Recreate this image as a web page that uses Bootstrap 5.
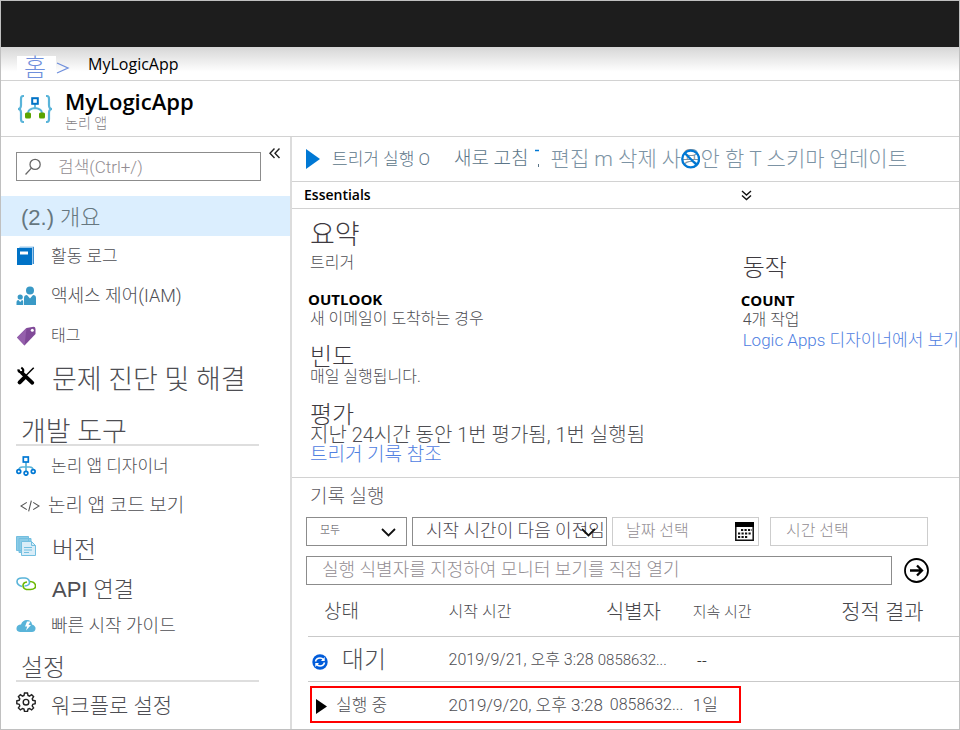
<!DOCTYPE html>
<html lang="ko">
<head>
<meta charset="utf-8">
<meta name="viewport" content="width=device-width, initial-scale=1">
<title>MyLogicApp</title>
<link href="https://cdn.jsdelivr.net/npm/bootstrap@5.3.0/dist/css/bootstrap.min.css" rel="stylesheet">
<style>
body{font-family:Roboto,"Noto Sans CJK KR",sans-serif;font-weight:300;color:#4e4e53;font-size:16px;line-height:20px;background:#fff}
.shell{min-height:100vh;border:1px solid #c0c0c0}
.latin{font-family:"Open Sans","Noto Sans",sans-serif;color:#000}
.arial{font-family:"Liberation Sans","Noto Sans CJK KR",sans-serif}
.fs11{font-size:11px}.fs14{font-size:14px}.fs15{font-size:15px}.fs16{font-size:16px}.fs17{font-size:17px}.fs18{font-size:18px}
.fs19{font-size:19px}.fs20{font-size:20px}.fs21{font-size:21px}.fs22{font-size:22px}.fs24{font-size:24px}.fs27{font-size:27px}
.line-b{border-bottom:1px solid #d2d2d2}
.topbar{height:46px;background:#1d1d1d}
.crumbs{height:34px;background:linear-gradient(#d6d6d6,#fff 75%);padding-left:16px}
.crumbs a{color:#6f8fdc;background:#fff;line-height:24px;padding:0 10px 0 7px}
.crumb-sep{width:24px}
.titlebar{height:56px;padding-left:16px}
.titlebar h1{line-height:24px}
.subtitle{color:#858185}
.side{flex:0 0 291px;border-right:2px solid #dcdcdc}
.search-row{padding:15px 9px 15px 15px}
.search-box{border:1px solid #8c8c8c;height:29px}
.search-box input{font-size:17px;font-weight:300;color:#888;border:0;outline:0;padding:0;background:transparent}
input::placeholder{color:#928d92!important;opacity:1}
.fold{height:2px;display:flex;align-items:center}
.side-item{height:40px;padding-left:15px;color:#4e4e53;text-decoration:none}
.side-item svg{flex:0 0 20px;margin-right:15px}
.side-item.current{background:#dbeefe;color:#66777f;padding-left:20px}
.side-title{margin:0 31px 0 15px;padding-left:5px;border-bottom:2px solid #dedede;font-weight:300;color:#4e4e53}
.side-title.dev{height:50px;padding-top:20px}
.side-title.cfg{height:36px;padding-top:8px}
.tools{height:45px;padding-left:14px}
.tools button{border:0;background:none;padding:0;white-space:nowrap;font-weight:300}
.tool-a{color:#5b7588;margin-right:24px}
.tool-a.again{margin-right:6px}
.tool-b{color:#7c93a4;font-size:21px}
.tip{margin-right:10px}
.over{position:absolute;left:0;top:0;width:100%;height:100%}
.ess-head{height:27px;padding-left:12px}
.pair{display:grid;grid-template-columns:2fr 1fr}
.ess-body{height:269px;padding-left:18px}
.ess-body h2,.ess-body p{margin:0;font-weight:300}
.ess-body a{color:#4f80e1;text-decoration:none;white-space:nowrap}
.ess-body h2{line-height:28px;color:#3e3a40}
.ess-body h2.tight{margin-top:18px;line-height:20px}
.ess-body h2.acts{margin-top:45px}
.ess-body .kind{font-weight:700;margin-left:-2px}
.hist{padding:9px 0 0 14px}
.hist h2{font-weight:300;line-height:20px;margin:0 0 10px 4px;color:#5d595f}
.fields{display:grid;grid-template-columns:101px 195px 147px 1fr;column-gap:5px;margin-right:31px}
.field{height:29px;border:1px solid #8c8c8c;position:relative}
.field.dim{border-color:#cdcdcd}
.field select,.field input{appearance:none;border:0;outline:0;background:transparent;width:100%;height:27px;font-weight:300;color:#4c4750;padding:0 0 2px 13px}
.field.wide input,.field.late input{padding-left:15px}
.fields .late{margin-left:6px}
.finder{margin:10px 30px 0 0}
.caret{position:absolute;right:10px;top:10px;pointer-events:none}
.runs{table-layout:fixed;width:100%;margin:0}
.runs th,.runs td{font-weight:300;white-space:nowrap;vertical-align:middle;padding:3px 0 0;border-bottom:1px solid #c9c9c9}
.runs thead tr{height:51px}.runs tbody tr{height:45px}
.runs th{color:#48484c}
.runs tbody tr:last-child td{border:0}
.runs-wrap{position:relative;margin-left:2px}
.mark-box{position:absolute;left:2px;bottom:3px;width:66.2%;height:37px;border:2px solid #f00;pointer-events:none}
</style>
<script src="https://cdn.jsdelivr.net/npm/bootstrap@5.3.0/dist/js/bootstrap.bundle.min.js"></script>
</head>
<body>
<div class="shell d-flex flex-column">
  <header>
    <div class="topbar"></div>
    <nav class="crumbs line-b d-flex align-items-center" aria-label="breadcrumb">
      <a href="#" class="fs24 text-decoration-none mt-2">홈</a>
      <svg class="crumb-sep mt-2" height="12" viewBox="0 0 24 12" fill="none" stroke="#6f8fdc" stroke-width="1.3"><path d="M1 1 12 6 1 11"/></svg>
      <span class="latin fs16 fw-normal ms-2">MyLogicApp</span>
    </nav>
    <div class="titlebar line-b d-flex align-items-center">
      <svg width="36" height="30" viewBox="0 0 36 30" fill="none"><path d="M7 2H6Q4 2 4 5V11Q4 15 1 15Q4 15 4 19V25Q4 28 6 28H7M29 2h1q2 0 2 3v6q0 4 3 4q-3 0-3 4v6q0 3-2 3h-1" stroke="#59b4d9" stroke-width="2.2"/><path d="M18 9v5M11 19q0-4 7-5q7 1 7 5" stroke="#59b4d9" stroke-width="1.8"/><rect x="15.200" y="4.200" width="5.600" height="5.600" stroke="#0072c6" stroke-width="2"/><rect x="8" y="18.500" width="6" height="6" rx="1.500" fill="#59a400"/><rect x="22" y="18.500" width="6" height="6" rx="1.500" fill="#59a400"/></svg>
      <div class="ms-2 ps-1 pt-1">
        <h1 class="latin fs22 fw-semibold m-0">MyLogicApp</h1>
        <div class="fs14 subtitle">논리 앱</div>
      </div>
    </div>
  </header>
  <div class="d-flex flex-grow-1">
    <aside class="side">
      <div class="search-row d-flex align-items-start">
        <label class="search-box d-flex align-items-center flex-grow-1 me-2">
          <svg class="ms-2 me-3" width="17" height="17" viewBox="0 0 16 16" fill="none" stroke="#666" stroke-width="1.2"><circle cx="9.500" cy="6" r="4.800"/><path d="M6 9.500 0.500 15.500"/></svg>
          <input class="w-75" type="text" aria-label="검색" placeholder="검색(Ctrl+/)">
        </label>
        <button class="fold btn p-0 border-0 lh-1" aria-label="접기"><svg width="12" height="11" viewBox="0 0 12 11" fill="none" stroke="#222" stroke-width="1.4"><path d="M5.500 .5 1 5.200 5.500 10M10.500.5 6 5.200 10.500 10"/></svg></button>
      </div>
      <nav>
        <a href="#" class="side-item current arial d-flex align-items-center fs22"><span class="pt-1">(2.) 개요</span></a>
        <a href="#" class="side-item d-flex align-items-center fs17"><svg width="20" height="20" viewBox="0 0 20 20"><path d="M4 .5h14v17l-2 1V3H2z" fill="#9cc9ec"/><path d="M17.500 1v17" stroke="#3c8ed0"/><path d="M1 2h15v17H1z" fill="#0072c6"/><path d="M4 5.500h8v3H4z" fill="#fff"/></svg>활동 로그</a>
        <a href="#" class="side-item d-flex align-items-center fs18"><svg width="20" height="20" viewBox="0 0 20 20" fill="#3999c6"><circle cx="14" cy="4.500" r="4"/><path d="M8 19V12q0-3 3-3l3 3.500L17 9q3 0 3 3v7z"/><circle cx="4.200" cy="11" r="2.600"/><path d="M.5 19v-3q0-2 2-2l1.700 2L6 14q1.200 0 1.200 1.500V19z"/></svg>액세스 제어(IAM)</a>
        <a href="#" class="side-item d-flex align-items-center fs16"><svg width="20" height="20" viewBox="0 0 20 20"><path d="M1 11.500 10.500 2 17.500 .8Q19.500.8 19.500 3v5L8.500 19.500z" fill="#804998"/><path d="M1 11.500 10.500 2l-2 17.500z" fill="#9560ac"/><circle cx="16.300" cy="4.300" r="1.500" fill="#fff"/></svg>태그</a>
        <a href="#" class="side-item d-flex align-items-center fs27"><svg class="me-3" width="22" height="22" viewBox="0 0 22 22" fill="none" stroke="#000"><path d="M6.500 7.500 18 18.500" stroke-width="4" stroke-linecap="round"/><path d="M2.500 3.800Q3 7.500 7 7.500Q9.500 4 5.800 1.800" stroke-width="2.500"/><path d="M19.500 2 11 10.500" stroke-width="1.600"/><path d="M9.500 12.500 4 18" stroke-width="4.500" stroke-linecap="round"/></svg><span class="pt-2">문제 진단 및 해결</span></a>
        <h2 class="side-title dev fs27">개발 도구</h2>
        <a href="#" class="side-item d-flex align-items-center fs17"><svg width="20" height="20" viewBox="0 0 20 20" fill="none" stroke="#0078d4" stroke-width="1.700"><path d="M10 6v9M3 14q0-3 3.500-3h7q3.500 0 3.500 3" stroke="#59b4d9"/><rect x="7.300" y="1" width="5" height="5" fill="#fff"/><circle cx="2.800" cy="15.500" r="1.900" fill="#fff"/><circle cx="10" cy="17.300" r="1.900" fill="#fff"/><circle cx="17.200" cy="15.500" r="1.900" fill="#fff"/></svg>논리 앱 디자이너</a>
        <a href="#" class="side-item d-flex align-items-center fs19"><svg class="ms-1 me-2" width="22" height="14" viewBox="0 0 22 14" fill="none" stroke="#555" stroke-width="1.200"><path d="M7.500 3 1 7l6.500 4M14.500 3 21 7l-6.500 4M12.500 1 9.500 13"/></svg>논리 앱 코드 보기</a>
        <a href="#" class="side-item d-flex align-items-center fs24"><svg class="me-3" width="20" height="20" viewBox="0 0 20 20" fill="#d9edf8" stroke="#73bfe0"><path d="M.5.5h12v14H.5zM3 2.500h12v14H3z" fill="#8ccbe6"/><path d="M5.500 5.500h10l4 4v10h-14z"/><path d="M15.500 5.500v4h4M8 11.500h8M8 14h8M8 16.500h5" fill="none"/></svg><span class="pt-2">버전</span></a>
        <a href="#" class="side-item arial d-flex align-items-center fs22"><svg class="me-3" width="20" height="20" viewBox="0 0 20 20" fill="none" stroke-width="1.600"><path d="M6 10.500q-5-1.500-5-5t5-3.500h3q4 .5 4.500 4t-5 4" stroke="#59b4d9"/><path d="M14 5.500q5 .5 5.500 4t-5 4h-4q-3.500-1-3.500-4T11 6" stroke="#6bb700"/></svg><span class="pt-2">API 연결</span></a>
        <a href="#" class="side-item d-flex align-items-center fs18"><svg width="20" height="20" viewBox="0 0 20 20"><path d="M4 16Q0 15.500.5 12T5 8.500Q6.500 4 11 4q4.500 0 5 4.500Q20 10 19.500 13T16 16z" fill="#59b4d9"/><path d="M11 5.500h3.500L12.500 9h2.500l-5 5.500 1.200-4H9z" fill="#fff"/></svg>빠른 시작 가이드</a>
        <h2 class="side-title cfg fs24">설정</h2>
        <a href="#" class="side-item d-flex align-items-center fs21"><svg width="20" height="20" viewBox="0 0 20 20" fill="none" stroke="#222" stroke-width="1.400"><path d="M8.500 1h3l.5 2.500 1.500.6 2.100-1.400 2 2-1.400 2.100.6 1.500 2.400.5v3l-2.400.5-.6 1.500 1.400 2.100-2 2-2.100-1.400-1.500.6-.5 2.400h-3L8 17.100l-1.500-.6-2.100 1.400-2-2 1.400-2.100-.6-1.500L.8 11.800v-3l2.400-.5.6-1.500-1.400-2.100 2-2 2.100 1.400L8 3.500z"/><circle cx="10" cy="10.200" r="2.800"/></svg><span class="pt-2">워크플로 설정</span></a>
      </nav>
    </aside>
    <main class="flex-grow-1" style="min-width:0">
      <div class="tools line-b d-flex align-items-center">
        <button class="tool-a fs17 d-flex align-items-center"><svg class="me-2" width="18" height="20" viewBox="0 0 18 20"><path d="M0 0 14 10 0 20z" fill="#0078d4"/></svg>트리거 실행 O</button>
        <button class="tool-a again fs19">새로 고침</button>
        <svg class="tip" width="6" height="20" viewBox="0 0 6 20"><path d="M0 1.500h4" stroke="#0078d4" stroke-width="1.500"/><path d="M3.500 15v3" stroke="#5b7588"/></svg>
        <button class="tool-b">편집 m 삭제 사<span class="position-relative">용<svg class="over" viewBox="0 0 20 20" preserveAspectRatio="xMidYMid meet" fill="none" stroke="#0078d4" stroke-width="2.400"><circle cx="10" cy="10" r="8.700"/><path d="M4 4 16 16"/></svg></span>안 함 T 스키마 업데이트</button>
      </div>
      <div class="ess-head pair line-b align-items-center">
        <span class="latin fs14 fw-semibold">Essentials</span>
        <button class="btn p-0 border-0 lh-1 text-start" aria-label="펼치기"><svg width="11" height="11" viewBox="0 0 11 11" fill="none" stroke="#111" stroke-width="1.400"><path d="M1 1l4.500 4L10 1M1 5.500l4.500 4L10 5.500"/></svg></button>
      </div>
      <section class="ess-body pair line-b">
        <div>
          <h2 class="fs27 pt-2 mt-1">요약</h2>
          <p class="fs16 mt-1">트리거</p>
          <p class="latin kind fs15 mt-3">OUTLOOK</p>
          <p class="fs16">새 이메일이 도착하는 경우</p>
          <h2 class="fs24 tight">빈도</h2>
          <p class="fs16">매일 실행됩니다.</p>
          <h2 class="fs24 tight">평가</h2>
          <p class="fs20">지난 24시간 동안 1번 평가됨, 1번 실행됨</p>
          <p class="fs19"><a href="#">트리거 기록 참조</a></p>
        </div>
        <div>
          <h2 class="fs24 acts">동작</h2>
          <p class="latin kind fs15 mt-2">COUNT</p>
          <p class="fs16">4개 작업</p>
          <p class="fs17"><a href="#">Logic Apps 디자이너에서 보기</a></p>
        </div>
      </section>
      <section class="hist">
        <h2 class="fs19">기록 실행</h2>
        <div class="fields">
          <div class="field"><select class="fs11" aria-label="상태"><option>모두</option></select><svg class="caret" width="15" height="9" viewBox="0 0 15 9" fill="none" stroke="#111" stroke-width="1.800"><path d="M1 1l6.500 6.500L14 1"/></svg></div>
          <div class="field"><select class="fs18" aria-label="시작 시간"><option>시작 시간이 다음 이전임</option></select><svg class="caret" width="15" height="9" viewBox="0 0 15 9" fill="none" stroke="#111" stroke-width="1.800"><path d="M1 1l6.500 6.500L14 1"/></svg></div>
          <div class="field dim"><input class="fs16" type="text" placeholder="날짜 선택" aria-label="날짜"><svg class="position-absolute end-0 me-1 mt-1 top-0" width="19" height="19" viewBox="0 0 19 19"><path d="M.8.800h17.400v17.400H.8z" fill="#fff" stroke="#111" stroke-width="1.500"/><path d="M0 0h19v5H0z"/><path d="M6 8h11M3 11.500h14M3 15h10" stroke="#111" stroke-width="2.200" stroke-dasharray="2.200 1.300"/></svg></div>
          <div class="field dim late"><input class="fs16" type="text" placeholder="시간 선택" aria-label="시간"></div>
        </div>
        <div class="finder d-flex align-items-center">
          <div class="field wide flex-grow-1"><input class="fs18" type="text" placeholder="실행 식별자를 지정하여 모니터 보기를 직접 열기" aria-label="실행 식별자"></div>
          <button class="btn p-0 border-0 lh-1 ms-2" aria-label="열기"><svg class="ms-1" width="25" height="25" viewBox="0 0 25 25" fill="none" stroke="#000"><circle cx="12.500" cy="12.500" r="11.500" stroke-width="1.800"/><path d="M6 12.500h12M13 7.500l5 5-5 5" stroke-width="2.300"/></svg></button>
        </div>
        <div class="runs-wrap">
          <table class="runs">
            <colgroup><col style="width:21.6%"><col style="width:22.300%"><col style="width:15.200%"><col style="width:22.800%"><col></colgroup>
            <thead><tr>
              <th class="fs19"><span class="ms-3">상태</span></th><th class="fs16">시작 시간</th><th class="fs20"><span class="ms-2 ps-1">식별자</span></th><th class="fs15">지속 시간</th><th class="fs21">정적 결과</th>
            </tr></thead>
            <tbody>
              <tr>
                <td class="fs24"><svg class="ms-1 me-2" width="16" height="16" viewBox="0 0 16 16"><circle cx="8" cy="8" r="7.700" fill="#015cda"/><path d="M3.500 7.500q.8-3.500 4.500-3.500 2.200 0 3.500 1.800M12.500 8.500q-.8 3.500-4.500 3.500-2.200 0-3.500-1.800" fill="none" stroke="#fff" stroke-width="1.600"/><path d="M12.700 3v4H9zM3.300 13V9H7z" fill="#fff"/></svg> 대기</td>
                <td class="fs16">2019/9/21, 오후 3:28</td><td class="fs15"><span class="ps-1">0858632...</span></td><td class="latin fs16"><span class="ms-1">--</span></td><td></td>
              </tr>
              <tr>
                <td class="fs17"><svg class="ms-2 me-2" width="12" height="15" viewBox="0 0 12 15"><path d="M0 0 11 7.500 0 15z"/></svg>실행 중</td>
                <td class="fs17">2019/9/20, 오후 3:28</td><td class="fs16 ps-3">0858632...</td><td class="fs17">1일</td><td></td>
              </tr>
            </tbody>
          </table>
          <div class="mark-box"></div>
        </div>
      </section>
    </main>
  </div>
</div>
</body>
</html>
